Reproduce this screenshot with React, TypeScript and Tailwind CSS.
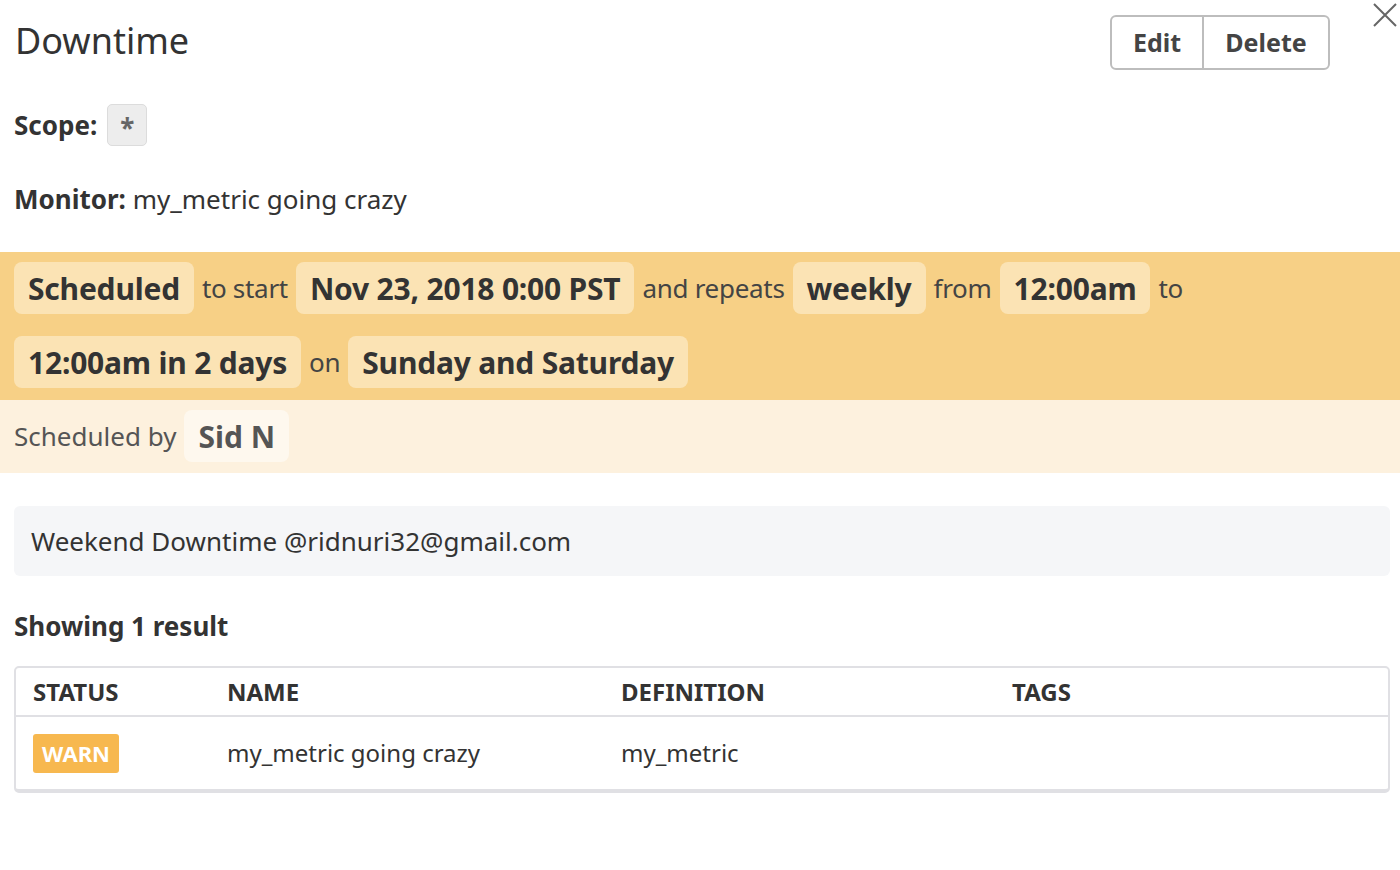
import React from 'react';

const font = { fontFamily: '"Noto Sans", "Open Sans", sans-serif' };

const Chip = ({ children }: { children: React.ReactNode }) => (
  <span className="inline-flex h-[52px] items-center rounded-[8px] bg-[#fbe3b4] px-[14px] text-[30px] font-bold tracking-[-0.2px] text-[#333]">
    {children}
  </span>
);

const Word = ({ children }: { children: React.ReactNode }) => (
  <span className="text-[26px] tracking-[-0.3px] text-[#444]">{children}</span>
);

const columns = [
  { label: 'STATUS', width: 'w-[194px]' },
  { label: 'NAME', width: 'w-[394px]' },
  { label: 'DEFINITION', width: 'w-[391px]' },
  { label: 'TAGS', width: 'flex-1' },
];

export default function App() {
  return (
    <div className="relative h-[870px] w-[1400px] bg-white text-[#333]" style={font}>
      {/* close */}
      <button className="absolute right-[3px] top-[3px] h-[24px] w-[24px]">
        <svg viewBox="0 0 24 24" className="h-[24px] w-[24px]" stroke="#666" strokeWidth="2" fill="none">
          <path d="M1 1 L23 23 M23 1 L1 23" />
        </svg>
      </button>

      <div className="flex items-start justify-between pl-[15px] pr-[70px] pt-[15px]">
        <h1 className="mt-[2px] text-[36px] leading-[48px] text-[#333]">Downtime</h1>
        <div className="flex h-[55px] overflow-hidden rounded-[6px] border-2 border-[#bdbdbd]">
          <button className="w-[92px] border-r-2 border-[#bdbdbd] text-[25px] font-bold text-[#444]">Edit</button>
          <button className="w-[124px] text-[25px] font-bold text-[#444]">Delete</button>
        </div>
      </div>

      <div className="mt-[34px] flex items-center gap-[10px] px-[14px]">
        <span className="text-[26px] font-bold text-[#333]">Scope:</span>
        <span className="flex h-[42px] w-[40px] items-start justify-center rounded-[5px] border border-[#dcdcdc] bg-[#ededed] pt-[4px] text-[26px] font-bold text-[#666]">
          *
        </span>
      </div>

      <div className="mt-[34px] px-[14px] text-[26px] text-[#333]">
        <span className="font-bold">Monitor:</span> my_metric going crazy
      </div>

      <div className="mt-[33px] flex flex-col gap-[22px] bg-[#f7d086] px-[14px] pb-[12px] pt-[10px]">
        <div className="flex items-center gap-[8px]">
          <Chip>Scheduled</Chip>
          <Word>to start</Word>
          <Chip>Nov 23, 2018 0:00 PST</Chip>
          <Word>and repeats</Word>
          <Chip>weekly</Chip>
          <Word>from</Word>
          <Chip>12:00am</Chip>
          <Word>to</Word>
        </div>
        <div className="flex items-center gap-[8px]">
          <Chip>12:00am in 2 days</Chip>
          <Word>on</Word>
          <Chip>Sunday and Saturday</Chip>
        </div>
      </div>

      <div className="flex items-center gap-[8px] bg-[#fdf1de] px-[14px] pb-[11px] pt-[10px]">
        <span className="text-[26px] text-[#555]">Scheduled by</span>
        <span className="inline-flex h-[52px] items-center rounded-[8px] bg-[#fef8ee] px-[14px] text-[30px] font-bold text-[#555]">
          Sid N
        </span>
      </div>

      <div className="ml-[14px] mr-[10px] mt-[33px] flex h-[70px] items-center rounded-[6px] bg-[#f5f6f8] px-[17px] text-[26px] text-[#333]">
        Weekend Downtime @ridnuri32@gmail.com
      </div>

      <div className="mt-[31px] px-[14px] text-[26px] font-bold text-[#333]">Showing 1 result</div>

      <div className="ml-[14px] mr-[10px] mt-[20px] overflow-hidden rounded-[5px] border-2 border-b-4 border-[#e0e0e4]">
        <div className="flex h-[49px] items-center border-b-2 border-[#e0e0e4] px-[17px]">
          {columns.map((c) => (
            <div key={c.label} className={`${c.width} text-[24px] font-bold text-[#333]`}>
              {c.label}
            </div>
          ))}
        </div>
        <div className="flex h-[72px] items-center px-[17px] text-[24px] text-[#333]">
          <div className="w-[194px]">
            <span className="inline-flex h-[39px] w-[86px] items-center justify-center rounded-[3px] bg-[#f7b84f] text-[22px] font-bold text-white">
              WARN
            </span>
          </div>
          <div className="w-[394px]">my_metric going crazy</div>
          <div className="w-[391px]">my_metric</div>
          <div className="flex-1" />
        </div>
      </div>
    </div>
  );
}
